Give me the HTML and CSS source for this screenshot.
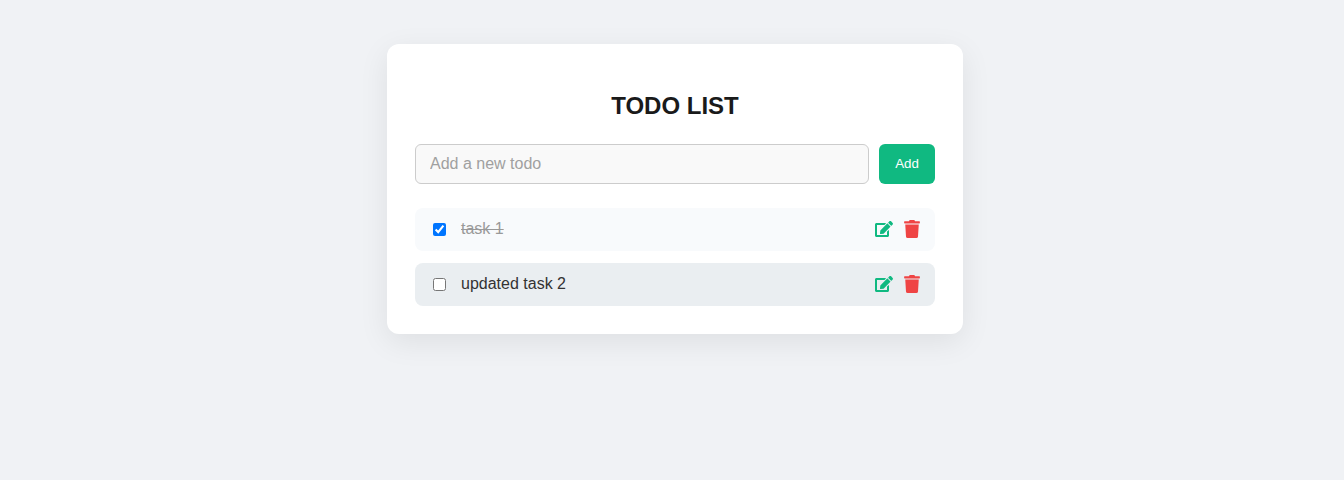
FILE: index.html
```html
<!DOCTYPE html>
<html lang="en">
<head>
<meta charset="utf-8">
<title>Todo List</title>
<link rel="stylesheet" href="styles.css">
</head>
<body>
<svg class="sprite" aria-hidden="true">
  <symbol id="edit" viewBox="0 0 576 512">
    <path d="M402.600 83.200l90.200 90.200c3.800 3.800 3.800 10 0 13.800L274.400 405.600l-92.800 10.300c-12.400 1.400-22.900-9.100-21.500-21.500l10.300-92.800L388.800 83.200c3.800-3.800 10-3.800 13.800 0zm162-22.900l-48.800-48.800c-15.200-15.200-39.900-15.200-55.200 0l-35.400 35.400c-3.800 3.800-3.800 10 0 13.800l90.200 90.200c3.800 3.800 10 3.800 13.800 0l35.400-35.400c15.200-15.300 15.200-40 0-55.200zM384 346.200V448H64V128h229.800c3.200 0 6.200-1.300 8.500-3.500l40-40c7.600-7.600 2.200-20.500-8.500-20.500H48C21.500 64 0 85.500 0 112v352c0 26.500 21.500 48 48 48h352c26.500 0 48-21.500 48-48V306.200c0-10.700-12.900-16-20.500-8.500l-40 40c-2.200 2.300-3.500 5.300-3.500 8.500z"/>
  </symbol>
  <symbol id="trash" viewBox="0 0 448 512">
    <path d="M432 32H312l-9.400-18.700A24 24 0 0 0 281.100 0H166.800a23.720 23.720 0 0 0-21.400 13.300L136 32H16A16 16 0 0 0 0 48v32a16 16 0 0 0 16 16h416a16 16 0 0 0 16-16V48a16 16 0 0 0-16-16zM53.200 467a48 48 0 0 0 47.900 45h245.800a48 48 0 0 0 47.900-45L416 128H32z"/>
  </symbol>
</svg>
<main class="card">
  <h2 class="title">TODO LIST</h2>
  <form class="add-form">
    <input class="add-input" type="text" placeholder="Add a new todo">
    <button class="add-button" type="button">Add</button>
  </form>
  <ul class="list">
    <li class="item">
      <input class="check" type="checkbox" checked>
      <span class="text done">task 1</span>
      <span class="actions">
        <svg class="icon edit"><use href="#edit"/></svg>
        <svg class="icon trash"><use href="#trash"/></svg>
      </span>
    </li>
    <li class="item active">
      <input class="check" type="checkbox">
      <span class="text">updated task 2</span>
      <span class="actions">
        <svg class="icon edit"><use href="#edit"/></svg>
        <svg class="icon trash"><use href="#trash"/></svg>
      </span>
    </li>
  </ul>
</main>
</body>
</html>
```
FILE: styles.css
```css
* { box-sizing: border-box; }
body {
  min-height: 100vh;
  margin: 0;
  padding: 44px 0 0 6px;
  background: #f0f2f5;
  font-family: "Liberation Sans", Arial, sans-serif;
}
.sprite { display: none; }
.card {
  width: 576px;
  height: 290px;
  margin: 0 auto;
  padding: 48px 28px 28px;
  background: #fff;
  border-radius: 12px;
  box-shadow: 0 8px 30px rgba(0, 0, 0, 0.08);
}
.title {
  margin: 0 0 24px;
  font-size: 24px;
  line-height: 28px;
  text-align: center;
  color: #1a1a1a;
}
.add-form { display: flex; gap: 10px; margin-bottom: 24px; }
.add-input {
  flex: 1;
  height: 40px;
  padding: 0 14px;
  border: 1px solid #ccc;
  border-radius: 6px;
  background: #f9f9f9;
  font: 16px "Liberation Sans", Arial, sans-serif;
}
.add-input::placeholder { color: #a0a0a0; }
.add-button {
  width: 56px;
  height: 40px;
  padding: 0 0 1px;
  border: 0;
  border-radius: 6px;
  background: #10b981;
  color: #fff;
  font: 13.333px "Liberation Sans", Arial, sans-serif;
}
.list { margin: 0; padding: 0; list-style: none; }
.item {
  display: flex;
  align-items: center;
  height: 43px;
  margin-bottom: 12px;
  padding: 0 14px;
  border-radius: 8px;
  background: #f8fafc;
}
.item.active { margin-bottom: 0; background: #eaeef1; }
.check { width: 13px; height: 13px; margin: 0 15px 0 4px; }
.text { flex: 1; font-size: 16px; line-height: 19px; padding-bottom: 2px; color: #333; }
.done { color: #999; text-decoration: line-through; }
.actions { display: flex; gap: 10px; padding-bottom: 1px; }
.icon { width: 18px; height: 18px; fill: currentColor; }
.edit { color: #10b981; }
.trash { color: #ef4444; }
```
